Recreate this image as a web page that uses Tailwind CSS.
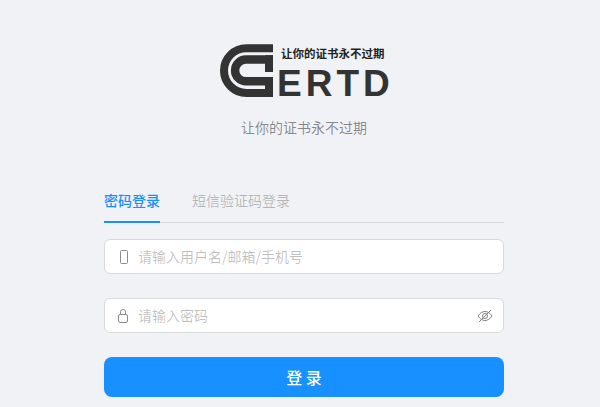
<!DOCTYPE html>
<html>
<head>
<meta charset="utf-8">
<script src="https://cdn.jsdelivr.net/npm/@tailwindcss/browser@4"></script>
</head>
<body class="m-0 h-[407px] w-[600px] overflow-hidden bg-[#f0f2f5] pl-[104px] font-['Noto_Sans_CJK_SC','Noto_Sans',sans-serif]">
<div class="flex w-[400px] flex-col">
  <div class="relative mt-[44px] h-[55px] w-[400px]">
    <svg class="absolute left-[116px] top-0" width="54" height="54" viewBox="0 0 54 54" fill="none" stroke="#333">
      <path d="M53 4.200H26.400A22.400 22.400 0 0 0 26.400 49H53" stroke-width="8"/>
      <path d="M53 15.500H26A10.900 10.900 0 0 0 26 37.300H53" stroke-width="8.400"/>
      <path fill="#333" stroke="none" d="M45 11.300H53V28H45Z M45 33H53V53H45Z"/>
    </svg>
    <span class="absolute left-[177px] top-[1px] text-[11.500px] leading-[16px] font-bold text-[#222]">让你的证书永不过期</span>
    <span class="absolute left-[173px] top-[20px] font-['Liberation_Sans',sans-serif] text-[37px] leading-[40px] font-bold tracking-[4px] text-[#333]">ERTD</span>
  </div>
  <p class="mt-[17px] mb-[1px] text-center text-[14px] leading-[22px] text-black/45">让你的证书永不过期</p>
  <div class="mt-[39px] flex h-[45px] gap-8 border-b border-black/10 text-[14px] leading-[22px]">
    <div class="h-[45px] border-b-2 border-[#1890ff] pt-[11px] font-medium text-[#1890ff]">密码登录</div>
    <div class="pt-[11px] text-black/25">短信验证码登录</div>
  </div>
  <div class="mt-[16px] flex h-[35px] items-center rounded-[6px] border border-[#d9d9d9] bg-white pl-[11px]">
    <svg width="14" height="16" viewBox="0 0 14 16" fill="none" stroke="#8c8c8c" class="mr-[8px]"><rect x="4.500" y="1.500" width="7" height="13" rx="1"/></svg>
    <span class="text-[14px] text-black/25">请输入用户名/邮箱/手机号</span>
  </div>
  <div class="mt-[24px] flex h-[35px] items-center rounded-[6px] border border-[#d9d9d9] bg-white pl-[11px] pr-[10px]">
    <svg width="14" height="16" viewBox="0 0 14 16" fill="none" stroke="#8c8c8c" class="mr-[8px]"><rect x="2.500" y="6.500" width="9" height="8" rx="1.500"/><path d="M4.500 6.500V4a2.500 2.500 0 0 1 5 0v2.500"/></svg>
    <span class="text-[14px] text-black/25">请输入密码</span>
    <svg width="16" height="16" viewBox="0 0 16 16" fill="none" stroke="#7f7f7f" class="ml-auto"><path d="M1 8c2-3 4.500-4.500 7-4.500S13 5 15 8c-2 3-4.500 4.500-7 4.500S3 11 1 8Z"/><circle cx="8" cy="8" r="2.500"/><path d="M2 14 14 2"/></svg>
  </div>
  <button class="mt-[24px] h-[40px] rounded-[8px] bg-[#1890ff] text-[16px] font-medium text-white">登 录</button>
</div>
</body>
</html>
